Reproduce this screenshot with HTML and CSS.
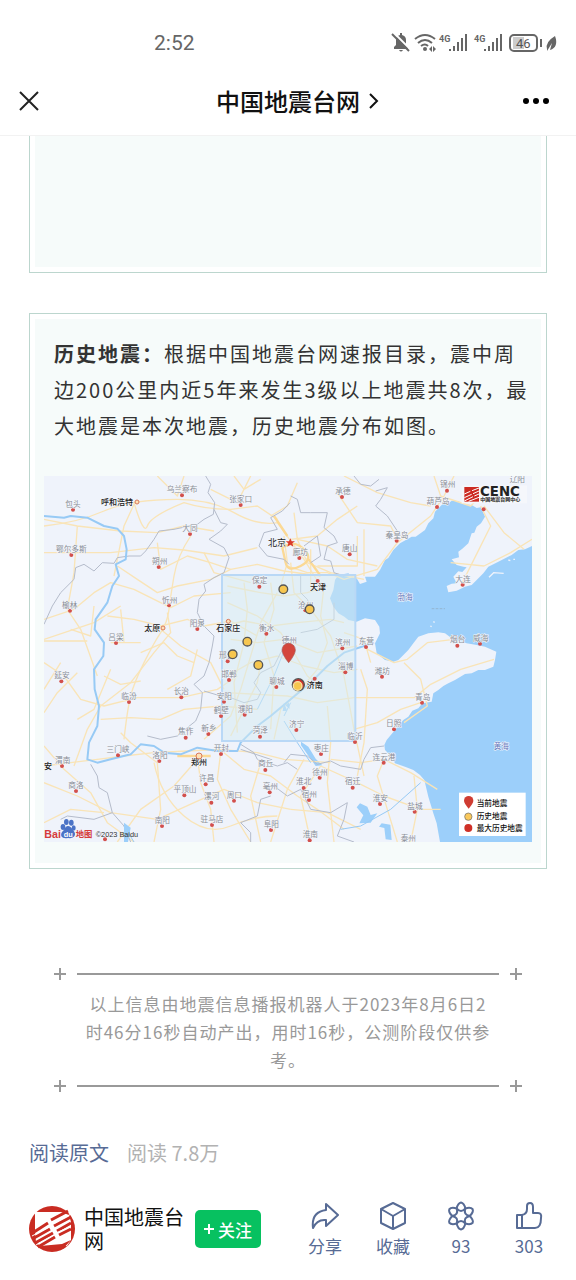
FILE: index.html
```html
<!DOCTYPE html>
<html lang="zh-CN">

<head>
    <meta charset="UTF-8">
    <meta name="viewport" content="width=device-width, initial-scale=1.0">
    <title>中国地震台网</title>
    <link rel="stylesheet" href="styles.css">
</head>

<body>
    <div class="status-bar">
        <span class="time">2:52</span>
        <svg class="status-icons" viewBox="0 0 168 24" width="168" height="24" aria-hidden="true">
            <g fill="#666">
                <path d="M3 18V16L5 14V9Q5 5 9 4V2H11V4Q15 5 15 9V14L17 16V18zM8 19h4q-2 3-4 0z" />
                <path d="M2 1L19 18" stroke="#fff" stroke-width="2" />
                <path d="M1 3L18 20" stroke="#666" stroke-width="2" />
                <circle cx="34" cy="18" r="2" />
                <path d="M38 18l3-3v6zM45 18l-3-3v6z" />
            </g>
            <path d="M24 8q10-8 20 0M27 12q7-6 14 0M30 15q4-3 7 0" fill="none" stroke="#666" stroke-width="2" />
            <text x="48" y="11" class="net">4G</text>
            <path d="M59 18v2M63 15v5M67 11v9M71 7v13M75 3v17" stroke="#666" stroke-width="2" />
            <text x="83" y="11" class="net">4G</text>
            <path d="M94 18v2M98 15v5M102 11v9M106 7v13M110 3v17" stroke="#666" stroke-width="2" />
            <rect x="122" y="6" width="11" height="12" fill="#ccc" />
            <rect x="119" y="4" width="27" height="16" rx="4" fill="none" stroke="#666" stroke-width="2" />
            <text x="125" y="17" class="level">46</text>
            <path d="M150 8v8" stroke="#666" stroke-width="2" />
            <path d="M156 18q-2-7 8-13 4 11-5 14l2-7-5 8z" fill="#666" />
        </svg>
    </div>

    <header class="header">
        <button class="icon-button close" aria-label="关闭">
            <svg viewBox="0 0 22 22" width="22" height="22"><path d="M2 2L20 20M20 2L2 20" fill="none" stroke="#222" stroke-width="2" /></svg>
        </button>
        <h1 class="title">中国地震台网
            <svg viewBox="0 0 12 20" width="12" height="20"><path d="M2 3L9 10L2 17" fill="none" stroke="#111" stroke-width="2" /></svg>
        </h1>
        <button class="icon-button more" aria-label="更多">
            <svg viewBox="0 0 28 8" width="28" height="8"><circle cx="4" cy="4" r="3" /><circle cx="14" cy="4" r="3" /><circle cx="24" cy="4" r="3" /></svg>
        </button>
    </header>

    <main class="article">
        <section class="card card-top"></section>

        <section class="card">
            <p class="intro"><strong>历史地震：</strong>根据中国地震台网速报目录，震中周边200公里内近5年来发生3级以上地震共8次，最大地震是本次地震，历史地震分布如图。</p>
            <svg class="map" viewBox="0 0 1464 1098" role="img" aria-label="历史地震分布图">
                <rect width="1464" height="1098" fill="#eff3fb" />

                <!-- sea -->
                <g transform="translate(723 -18)">
                    <path fill="#9ccffa" d="M480 97L492 99 500 92 520 94 535 102 560 105 575 114 588 112 600 140 588 160 575 170 568 188 560 190 550 220 532 236 520 245 522 262 500 268 515 285 535 290 545 292 532 306 520 304 505 320 515 340 500 341 485 348 490 367 515 362 540 350 560 345 575 330 595 310 610 290 640 275 680 255 700 240 720 238 741 228V1116H465L455 1060 445 1030 430 980 418 930 405 915 385 900 360 890 330 880 320 860 300 840 298 825 305 810 330 780 355 750 370 740 382 722 400 715 412 700 440 695 445 670 460 660 475 648 490 640 510 630 540 612 560 610 580 600 600 600 625 590 630 570 634 545 600 530 575 525 545 520 500 505 480 490 460 487 430 490 400 500 385 520 370 540 350 560 340 570 325 575 300 570 275 550 270 520 285 490 283 470 270 450 240 445 215 455 190 450 178 440 160 430 145 410 135 385 145 360 150 330 160 315 190 310 205 322 215 325 225 342 245 335 240 320 270 320 285 300 300 270 310 264 325 240 345 220 380 200 392 200 420 180 430 160 445 145 450 125 470 105z" />
                    <path fill="#9ccffa" d="M0 705l12-8 2 20zM48 815l22 15 22 36 20 20-20 2-24-34-20-28zM225 1000l22 10 10 25 20-5-20 28-34 2 12-24-20-24zM290 1060l26 4 4 46-18-2-4-34-16-4z" />
                    <path d="M612 322l14-14 30 2M670 270l6 2M685 268l5 0M445 455l4 2M436 468l4 2" stroke="#eff3fb" stroke-width="4" fill="none" />
                    <path d="M440 416h40" stroke="#8fa9bd" stroke-width="2" stroke-dasharray="8 4" />
                </g>

                <!-- main roads -->
                <g class="road">
                    <path d="M0 150Q100 140 180 105T400 70Q500 70 570 110T700 140L780 250 830 330" />
                    <path d="M270 80Q300 180 310 150T420 80Q480 100 560 100L640 90 700 130" />
                    <path d="M270 85L240 150 220 250 210 300M0 230H200L330 215 420 222 540 240 640 215" />
                    <path d="M0 130L100 150 230 165 340 170 420 150 510 165M100 150L90 290 70 400 110 460 160 600" />
                    <path d="M440 180Q400 240 390 300T375 400 350 470 300 560 260 660 240 790" />
                    <path d="M340 200L350 280 430 240 500 260 560 280 640 265 720 285 830 300" />
                    <path d="M0 430L90 400 150 350 200 320 270 340 380 395 450 360 560 350" />
                    <path d="M220 270L280 310 340 350 400 330 500 310 560 280M230 390L150 440 0 490" />
                    <path d="M190 420L270 430 350 450 430 430 480 450 560 435 640 480" />
                    <path d="M0 495H130M200 500H290M350 460L410 510 500 560 540 640" />
                    <path d="M370 410L380 470 330 530 260 620 170 690 130 760 90 870" />
                    <path d="M180 600L230 625 290 615M290 530L360 500 400 540 450 560M100 590L40 650 0 710" />
                    <path d="M0 560L60 600 110 670 180 690 280 665 410 665 520 640 580 600" />
                    <path d="M170 730L260 725 350 730 420 700 530 690 640 700M230 770L260 800 340 860 350 1000 330 1098" />
                    <path d="M0 870L80 860 160 850 240 840 330 830 430 825 530 820 640 830 720 850 860 860" />
                    <path d="M0 920L100 960 200 1010 340 1030 450 980 540 940 640 980 740 1000" />
                    <path d="M460 840L470 920 500 1000 510 1098M530 830L520 910 560 1000 620 1098M460 850L390 930 290 1000 220 1098" />
                    <path d="M330 860Q350 960 420 1020T560 1050 700 1020M0 810L60 880 140 950 190 1040 270 1098" />
                    <path d="M540 830L600 880 680 900 760 960 820 1000 900 1060M480 790L560 720 590 640 620 540 650 440 700 350" />
                    <path d="M550 380L640 420 710 470 750 530 790 600 840 640M540 450L600 435 680 450 760 440 860 430 900 440" />
                    <path d="M550 600L620 560 700 540 780 570 870 590 940 580M545 650L640 655 730 660 820 680 930 665" />
                    <path d="M560 780L600 700 640 620 650 560M690 790L710 700 760 650 820 580 850 500 830 420 840 330" />
                    <path d="M600 320L610 400 600 500 570 620 580 770M680 320L690 400 660 500 690 600 680 760" />
                    <path d="M550 330L650 350 720 360 790 350 850 330M560 490L640 500 720 490 820 530 940 510" />
                    <path d="M740 260L750 350 800 400 860 480 900 600 930 760 960 900" />
                    <path d="M720 180L730 260 710 330M750 110L760 190 790 260 860 290 960 310M740 190L820 180 880 130 940 90" />
                    <path d="M680 120L730 90 760 20M760 190L850 210 910 250 1000 270M800 220V330M820 270H940V180M960 160V300" />
                    <path d="M730 270L790 290 850 290 900 310 1000 280 1060 200 1160 120 1200 60 1230 0" />
                    <path d="M880 50L940 140 1040 150 1060 190M900 0L1000 50 1100 80 1160 90M1170 0L1190 60 1280 90 1320 50" />
                    <path d="M1310 90L1340 150 1290 250 1250 330M1220 260L1320 270 1400 230 1464 190M1320 90L1380 170 1440 220" />
                    <path d="M850 690L860 800 850 920 870 1098M950 580L970 640 960 800 940 900M930 665H1110L1160 625 1250 580 1350 550" />
                    <path d="M970 520L1050 560 1090 550 1150 500 1230 490M900 470L960 490 980 560M1080 560L1130 610 1150 690 1080 740" />
                    <path d="M930 760L1000 740 1070 700 1130 680M860 850L950 860 1020 850 1100 890 1180 940M830 870L940 920 1020 960 1130 1000H1190" />
                    <path d="M1020 850L1000 900 1030 1000 1060 1098M1110 900L1120 1000 1100 1098M740 1000L850 1010 950 1060" />
                    <path d="M780 850L730 940 680 1098M830 870L770 960 800 1098M650 860L620 960 650 1098" />
                    <path d="M340 0L400 60 420 0M570 0L600 40 650 10M500 40L580 80 620 0M0 640L50 560M240 500L230 400M80 460L140 480 150 390" />
                    <path d="M370 640L440 600 460 520M100 730L150 700 200 580M0 1040L80 1000 180 1010M480 230L510 290 620 320" />
                </g>
                <path class="road wide" d="M715 215Q750 190 780 220T770 270 725 260zM790 245L830 300M730 180L690 120M400 840H500" />

                <!-- province borders -->
                <g class="border">
                    <path d="M485 0L500 25 492 50 512 80 508 115 480 130 460 145 390 160 345 165 330 190 305 225 290 240 255 240 220 245 210 262 175 260 150 285 120 265 95 275 90 310 50 350 25 390 0 445" />
                    <path d="M510 100L530 140 550 145 530 165 495 190 540 215 555 245 540 290 510 305 480 325 485 345 465 370 460 410 480 450 510 480 505 510 495 560 480 600 450 625 475 650 470 700 455 735 430 755 400 780 350 790 310 780" />
                    <path d="M738 80L715 105 680 125 700 160 660 170 645 210 670 240 720 250 735 265M740 60L760 70 770 110 800 110 850 110 840 155 870 180 880 200 850 210 840 250 860 255 870 290 900 300M780 210L820 180 830 240 800 260" />
                    <path d="M995 45L1030 35 1010 70 995 90 1030 120 1050 150 1070 180M930 0L950 25 980 30 1005 10M770 300V350L790 370 800 395M770 470L820 460 870 430 870 380" />
                    <path d="M480 645L530 660 560 665 600 680 640 670 650 650 630 620 650 590 690 570 710 530 740 500M590 805L630 830 640 850 700 870 730 860 760 880M590 820L680 850" />
                    <path d="M1020 810L980 815 960 850 950 880 890 870 860 855 820 865 790 840 740 835 720 860M140 865L160 900 165 935 190 950 205 1010 150 1030 70 1020 50 1030M680 960L650 970 640 1020 590 1040 620 1070 620 1098" />
                    <path d="M205 1010L240 1050 260 1098M690 930L730 960 770 940 800 1000 860 1010 910 980 900 1030 880 1080 930 1098" />
                </g>

                <!-- rivers -->
                <g class="river">
                    <path stroke-width="6" d="M0 120L60 125 80 120 130 125 180 150 220 158 240 180 248 220 245 250 215 265 225 300 205 330 190 380 155 430 152 460 180 500 178 540 150 580 152 640 165 690 160 750 135 800 130 850 160 860 200 850 260 835 290 805 330 810 360 830 410 835 460 815 520 825 580 825 590 800 640 750 680 720 740 670 800 620 850 570 900 530 960 510 990 500" />
                    <path stroke-width="3" d="M640 700L690 600 730 500M720 735L760 800 800 860M890 1060L950 1050 1040 1000 1130 920M240 1050L270 1098M740 680L720 720" />
                </g>
                <path d="M240 1040l20 15-8 43h-12zM720 680l10 25h-14z" fill="#9ccffa" />

                <!-- 200 km search area -->
                <rect x="534" y="297" width="400" height="498" fill="#d6ebf2" fill-opacity=".5" stroke="#b9d8f6" stroke-width="6" />

                <g class="cities">
                    <g id="places"></g>
                    <circle class="ring" cx="279" cy="78" r="6" />
                    <circle class="ring" cx="357" cy="456" r="6" />
                    <circle class="ring" cx="553" cy="436" r="6" />
                    <circle class="ring" cx="465" cy="840" r="9" />
                    <path d="M739 187l4 9h10l-8 6 3 10-9-6-9 6 3-10-8-6h10z" fill="#d93b2b" />
                </g>

                <!-- earthquakes -->
                <g fill="#f6c64f" stroke="#555" stroke-width="4">
                    <circle cx="718" cy="340" r="13" />
                    <circle cx="797" cy="400" r="13" />
                    <circle cx="610" cy="497" r="13" />
                    <circle cx="566" cy="535" r="13" />
                    <circle cx="643" cy="567" r="13" />
                    <circle cx="763" cy="626" r="18" fill="#cf3027" />
                    <circle cx="761" cy="630" r="13" stroke="#f9e2a8" />
                </g>
                <path d="M734 560Q714 535 714 522a20 20 0 0 1 40 0Q754 535 734 560z" fill="#d4463c" stroke="#a95450" stroke-width="2" />

                <!-- CENC logo -->
                <rect x="1253" y="28" width="196" height="54" fill="#f5f7fb" />
                <rect x="1261" y="33" width="44" height="44" fill="#cc2a22" />
                <path d="M1261 54L1279 46M1284 44L1305 36M1261 65L1283 55M1287 53L1305 45M1261 75L1287 62M1291 60L1305 54M1274 76L1305 64" stroke="#fff" stroke-width="3" />
                <text class="cenc" x="1308" y="60">CENC</text>
                <text class="cenc-sub" x="1309" y="76">中国地震台网中心</text>

                <!-- Baidu logo -->
                <text class="baidu" x="1" y="1085">Bai</text>
                <g fill="#4b73c6">
                    <ellipse cx="57" cy="1053" rx="7" ry="9" />
                    <ellipse cx="67" cy="1038" rx="7" ry="9" />
                    <ellipse cx="82" cy="1040" rx="7" ry="9" />
                    <ellipse cx="89" cy="1056" rx="6" ry="8" />
                    <path d="M72 1050q8 0 14 11 11 10 5 20-4 7-19 5-15 3-20-5-3-10 7-18 6-13 13-13z" />
                </g>
                <text class="baidu-du" x="59" y="1082">du</text>
                <text class="baidu baidu-cn" x="95" y="1084">地图</text>
                <text class="copyright" x="155" y="1084">©2023 Baidu</text>

                <!-- legend -->
                <rect x="1245" y="950" width="200" height="130" fill="#fff" />
                <path d="M1274 998q-14-17-14-24a14 14 0 0 1 28 0q0 7-14 24z" fill="#cf3c32" />
                <circle cx="1273" cy="1022" r="11" fill="#fac85b" stroke="#666" stroke-width="2" />
                <circle cx="1273" cy="1056" r="12" fill="#cf3027" />
                <g class="legend-text">
                    <text x="1298" y="991">当前地震</text>
                    <text x="1298" y="1030">历史地震</text>
                    <text x="1298" y="1065">最大历史地震</text>
                </g>
            </svg>
        </section>

        <section class="note">
            <div class="rule"><i class="plus"></i><i class="line"></i><i class="plus"></i></div>
            <p>以上信息由地震信息播报机器人于2023年8月6日2时46分16秒自动产出，用时16秒，公测阶段仅供参考。</p>
            <div class="rule"><i class="plus"></i><i class="line"></i><i class="plus"></i></div>
        </section>

        <div class="read">
            <a href="#">阅读原文</a>
            <span>阅读 7.8万</span>
        </div>
    </main>

    <footer class="footer">
        <svg class="logo" viewBox="0 0 46 46" width="46" height="46" aria-hidden="true">
            <circle cx="23" cy="23" r="23" fill="#c92c22" />
            <path d="M6 6L32 6 40 9 42 16 42 34 38 40 12 41 7 36 6 26z" fill="#fff" />
            <path d="M5 26L19 17M22 14L39 5M5 32L21 23M25 20L42 11M6 37L24 27M28 25L42 17M9 41L26 31M30 29L42 23" stroke="#c92c22" stroke-width="3" fill="none" />
            <path d="M3 30L24 19M26 17L42 8M7 39L25 29M27 27L42 20" stroke="#fff" stroke-width="1" />
            <path d="M11 40L33 38 42 34 34 43 16 44z" fill="#c92c22" />
        </svg>
        <div class="name">中国地震台网</div>
        <button class="follow"><svg viewBox="0 0 10 10" width="10" height="10"><path d="M5 0V10M0 5H10" stroke="#fff" stroke-width="2" /></svg>关注</button>
        <div class="actions">
            <button class="action">
                <svg viewBox="0 0 30 30" width="30" height="30"><path d="M16 3L28 14 16 25V19Q7 18 3 27 1 11 16 9z" /></svg>
                <span>分享</span>
            </button>
            <button class="action">
                <svg viewBox="0 0 30 30" width="30" height="30"><path d="M15 2L27 8V22L15 28 3 22V8zM3 8L15 15 27 8M15 15V28" /></svg>
                <span>收藏</span>
            </button>
            <button class="action">
                <svg viewBox="0 0 30 30" width="30" height="30">
                    <defs><path id="petal" d="M10.600 7.500Q12 2 15 1.500 18 2 19.400 7.500 17 10 15 10T10.600 7.500z" /></defs>
                    <use href="#petal" />
                    <use href="#petal" transform="rotate(60 15 15)" />
                    <use href="#petal" transform="rotate(120 15 15)" />
                    <use href="#petal" transform="rotate(180 15 15)" />
                    <use href="#petal" transform="rotate(240 15 15)" />
                    <use href="#petal" transform="rotate(300 15 15)" />
                </svg>
                <span>93</span>
            </button>
            <button class="action">
                <svg viewBox="0 0 30 30" width="30" height="30"><path d="M3 14H8V27H3zM8 14Q13 13 13 8V5Q13 2 16 2T19 6V12H24Q28 12 27 17 27 27 21 27H8" /></svg>
                <span>303</span>
            </button>
        </div>
    </footer>

    <script>
        // name, dot x, dot y, label x, label y, style
        const places = [
            ['乌兰察布', 414, 58, 414, 48], ['包头', 87, 101, 87, 92], ['张家口', 590, 87, 590, 77],
            ['大同', 438, 174, 438, 165], ['鄂尔多斯', 82, 237, 82, 228], ['朔州', 344, 273, 347, 263],
            ['忻州', 375, 388, 377, 380], ['榆林', 78, 404, 77, 396], ['吕梁', 216, 501, 216, 491],
            ['阳泉', 460, 459, 460, 450], ['保定', 646, 332, 647, 322], ['衡水', 667, 473, 668, 464],
            ['延安', 52, 616, 54, 607], ['临汾', 255, 678, 255, 669], ['长治', 412, 664, 412, 655],
            ['邢台', 551, 556, 548, 547], ['邯郸', 555, 612, 555, 603], ['安阳', 540, 677, 541, 668],
            ['鹤壁', 531, 720, 532, 711], ['濮阳', 602, 716, 604, 708], ['聊城', 697, 633, 699, 624],
            ['新乡', 493, 774, 495, 765], ['焦作', 425, 785, 425, 775], ['菏泽', 648, 782, 649, 772],
            ['开封', 531, 834, 532, 824], ['三门峡', 222, 838, 222, 828], ['洛阳', 346, 855, 348, 846],
            ['渭南', 54, 870, 56, 860], ['商洛', 96, 945, 96, 936], ['商丘', 664, 882, 665, 871],
            ['许昌', 485, 925, 488, 915], ['平顶山', 421, 958, 423, 949], ['漯河', 502, 980, 503, 970],
            ['周口', 570, 974, 571, 965], ['亳州', 677, 949, 679, 940], ['南阳', 354, 1050, 355, 1040],
            ['驻马店', 504, 1047, 504, 1038], ['阜阳', 681, 1062, 682, 1052], ['', 183, 1090, 0, 0],
            ['锦州', 1209, 44, 1211, 34], ['葫芦岛', 1179, 93, 1182, 84], ['承德', 894, 63, 897, 54],
            ['秦皇岛', 1058, 194, 1059, 185], ['唐山', 917, 235, 917, 225], ['廊坊', 766, 246, 769, 236],
            ['沧州', 784, 403, 785, 395], ['大连', 1256, 326, 1257, 317], ['滨州', 895, 517, 896, 508],
            ['东营', 966, 513, 967, 505], ['烟台', 1240, 509, 1241, 499], ['威海', 1308, 503, 1310, 494],
            ['德州', 733, 510, 736, 502], ['淄博', 904, 589, 905, 580], ['潍坊', 1014, 602, 1015, 593],
            ['青岛', 1134, 680, 1136, 671], ['日照', 1050, 760, 1049, 751], ['临沂', 933, 798, 933, 788],
            ['济宁', 757, 762, 758, 752], ['枣庄', 831, 834, 832, 824], ['连云港', 1019, 860, 1020, 851],
            ['徐州', 827, 905, 828, 896], ['淮北', 779, 936, 779, 925], ['宿州', 795, 972, 796, 962],
            ['宿迁', 926, 935, 926, 925], ['淮安', 1008, 984, 1009, 975], ['盐城', 1112, 1007, 1113, 998],
            ['淮南', 797, 1093, 799, 1084], ['', 1319, 100, 0, 0],
            ['泰州', null, null, 1093, 1096], ['辽阳', null, null, 1420, 18],
            ['呼和浩特', null, null, 219, 86, 'major'], ['太原', null, null, 325, 466, 'major'],
            ['石家庄', null, null, 553, 465, 'major'], ['北京', null, null, 699, 210, 'capital'],
            ['天津', 821, 315, 822, 343, 'major'], ['济南', 812, 608, 812, 637, 'major'],
            ['郑州', null, null, 465, 868, 'major'], ['安', null, null, 12, 878, 'major'],
            ['渤海', null, null, 1083, 373, 'sea'], ['黄海', null, null, 1372, 820, 'sea']
        ];
        const svgNS = 'http://www.w3.org/2000/svg';
        const layer = document.getElementById('places');
        places.forEach(([name, x, y, tx, ty, type]) => {
            if (x !== null) {
                const dot = document.createElementNS(svgNS, 'circle');
                dot.setAttribute('cx', x);
                dot.setAttribute('cy', y);
                dot.setAttribute('r', 6);
                layer.appendChild(dot);
            }
            if (name) {
                const label = document.createElementNS(svgNS, 'text');
                label.setAttribute('x', tx);
                label.setAttribute('y', ty);
                label.setAttribute('class', type || 'town');
                label.textContent = name;
                layer.appendChild(label);
            }
        });
    </script>
</body>

</html>
```
FILE: styles.css
```css
* {
    box-sizing: border-box;
}

body {
    font-family: "Noto Sans CJK SC", "Noto Sans", sans-serif;
    margin: 0;
    background-color: #fff;
    color: #333;
}

button {
    font-family: inherit;
    border: none;
    background: none;
    padding: 0;
    cursor: pointer;
}

.status-bar {
    display: flex;
    align-items: center;
    justify-content: space-between;
    height: 66px;
    padding: 20px 17px 0 154px;
}

.time {
    font-family: Roboto, sans-serif;
    font-size: 21px;
    color: #666;
}

.net {
    font: bold 9px Roboto, sans-serif;
    fill: #666;
}

.level {
    font: 13px Roboto, sans-serif;
    fill: #555;
}

.header {
    display: flex;
    align-items: center;
    justify-content: space-between;
    height: 69px;
    padding: 0 26px 0 18px;
}

.icon-button {
    display: flex;
    width: 28px;
}

.close {
    width: 56px;
}

.title {
    display: flex;
    align-items: center;
    gap: 8px;
    margin: 0;
    font-size: 24px;
    font-weight: 500;
    line-height: 32px;
    color: #111;
}

.article {
    border-top: 1px solid #f2f2f2;
    padding: 0 29px;
}

.card {
    border: 1px solid #bcd6ce;
    padding: 5px;
    background-color: #f6fbfa;
    background-clip: content-box;
    margin-bottom: 40px;
}

.card-top {
    height: 137px;
    border-top: none;
    padding-top: 0;
}

.intro {
    margin: 0;
    padding: 17px 9px 32px 19px;
    font-size: 20px;
    line-height: 36px;
    letter-spacing: 2px;
}

.map {
    display: block;
    width: calc(100% - 18px);
    height: auto;
    margin: 0 9px 21px;
}

.road {
    fill: none;
    stroke: #f9e4b7;
    stroke-width: 4;
    stroke-linejoin: round;
}

.wide {
    stroke: #fbd995;
    stroke-width: 7;
}

.border {
    fill: none;
    stroke: #b5bccb;
    stroke-width: 3;
}

.river {
    fill: none;
    stroke: #97caf5;
    stroke-linejoin: round;
}

.cities circle {
    fill: #d2504c;
}

.cities .ring {
    fill: #fde2b6;
    stroke: #d8775a;
    stroke-width: 3;
}

.cities text {
    font-size: 23px;
    text-anchor: middle;
    fill: #888d96;
    paint-order: stroke;
    stroke: #f5f7fc;
    stroke-width: 3px;
}

.cities .major {
    font-size: 24px;
    font-weight: 500;
    fill: #222;
}

.cities .capital {
    font-size: 27px;
    fill: #222;
}

.cities .sea {
    fill: #6277bd;
}

.cenc {
    font: bold 40px "DejaVu Sans", sans-serif;
    fill: #222;
}

.cenc-sub {
    font-size: 15px;
    font-weight: bold;
    fill: #222;
}

.baidu {
    font: bold 32px "Liberation Sans", sans-serif;
    fill: #d63c3b;
}

.baidu-cn {
    font: bold 25px "Noto Sans CJK SC", sans-serif;
}

.baidu-du {
    font: bold 22px "Liberation Sans", sans-serif;
    fill: #fff;
}

.copyright {
    font: 22px "Liberation Sans", sans-serif;
    fill: #333;
}

.legend-text {
    font-size: 23px;
    font-weight: 500;
    fill: #111;
}

.note {
    margin-top: 93px;
    padding: 0 25px;
    color: #999;
    text-align: center;
}

.note p {
    margin: 0;
    padding: 4px 29px 0;
    font-size: 17px;
    line-height: 28px;
    letter-spacing: 1px;
}

.rule {
    display: flex;
    align-items: center;
    gap: 11px;
    height: 24px;
}

.line {
    flex: 1;
    height: 2px;
    background-color: #999;
}

.plus {
    width: 12px;
    height: 12px;
    background: linear-gradient(#999, #999) center / 12px 2px no-repeat,
        linear-gradient(#999, #999) center / 2px 12px no-repeat;
}

.read {
    display: flex;
    gap: 18px;
    margin-top: 39px;
    font-size: 20px;
    line-height: 32px;
    color: #b2b2b2;
}

.read a {
    color: #576b95;
    text-decoration: none;
}

.footer {
    display: flex;
    align-items: center;
    padding: 28px 13px 20px 29px;
}

.logo {
    flex: none;
}

.name {
    width: 102px;
    margin: 0 9px;
    font-size: 20px;
    line-height: 24px;
    color: #111;
}

.follow {
    display: flex;
    align-items: center;
    justify-content: center;
    gap: 4px;
    width: 66px;
    height: 38px;
    border-radius: 5px;
    background-color: #07c160;
    color: #fff;
    font-size: 17px;
    font-weight: 500;
}

.actions {
    display: flex;
    flex: 1;
    margin-left: 30px;
    padding-top: 4px;
}

.action {
    display: flex;
    flex: 1;
    flex-direction: column;
    align-items: center;
    font-size: 17px;
    line-height: 30px;
    color: #576b95;
}

.action svg {
    fill: none;
    stroke: #576b95;
    stroke-width: 2;
    stroke-linejoin: round;
}
```
